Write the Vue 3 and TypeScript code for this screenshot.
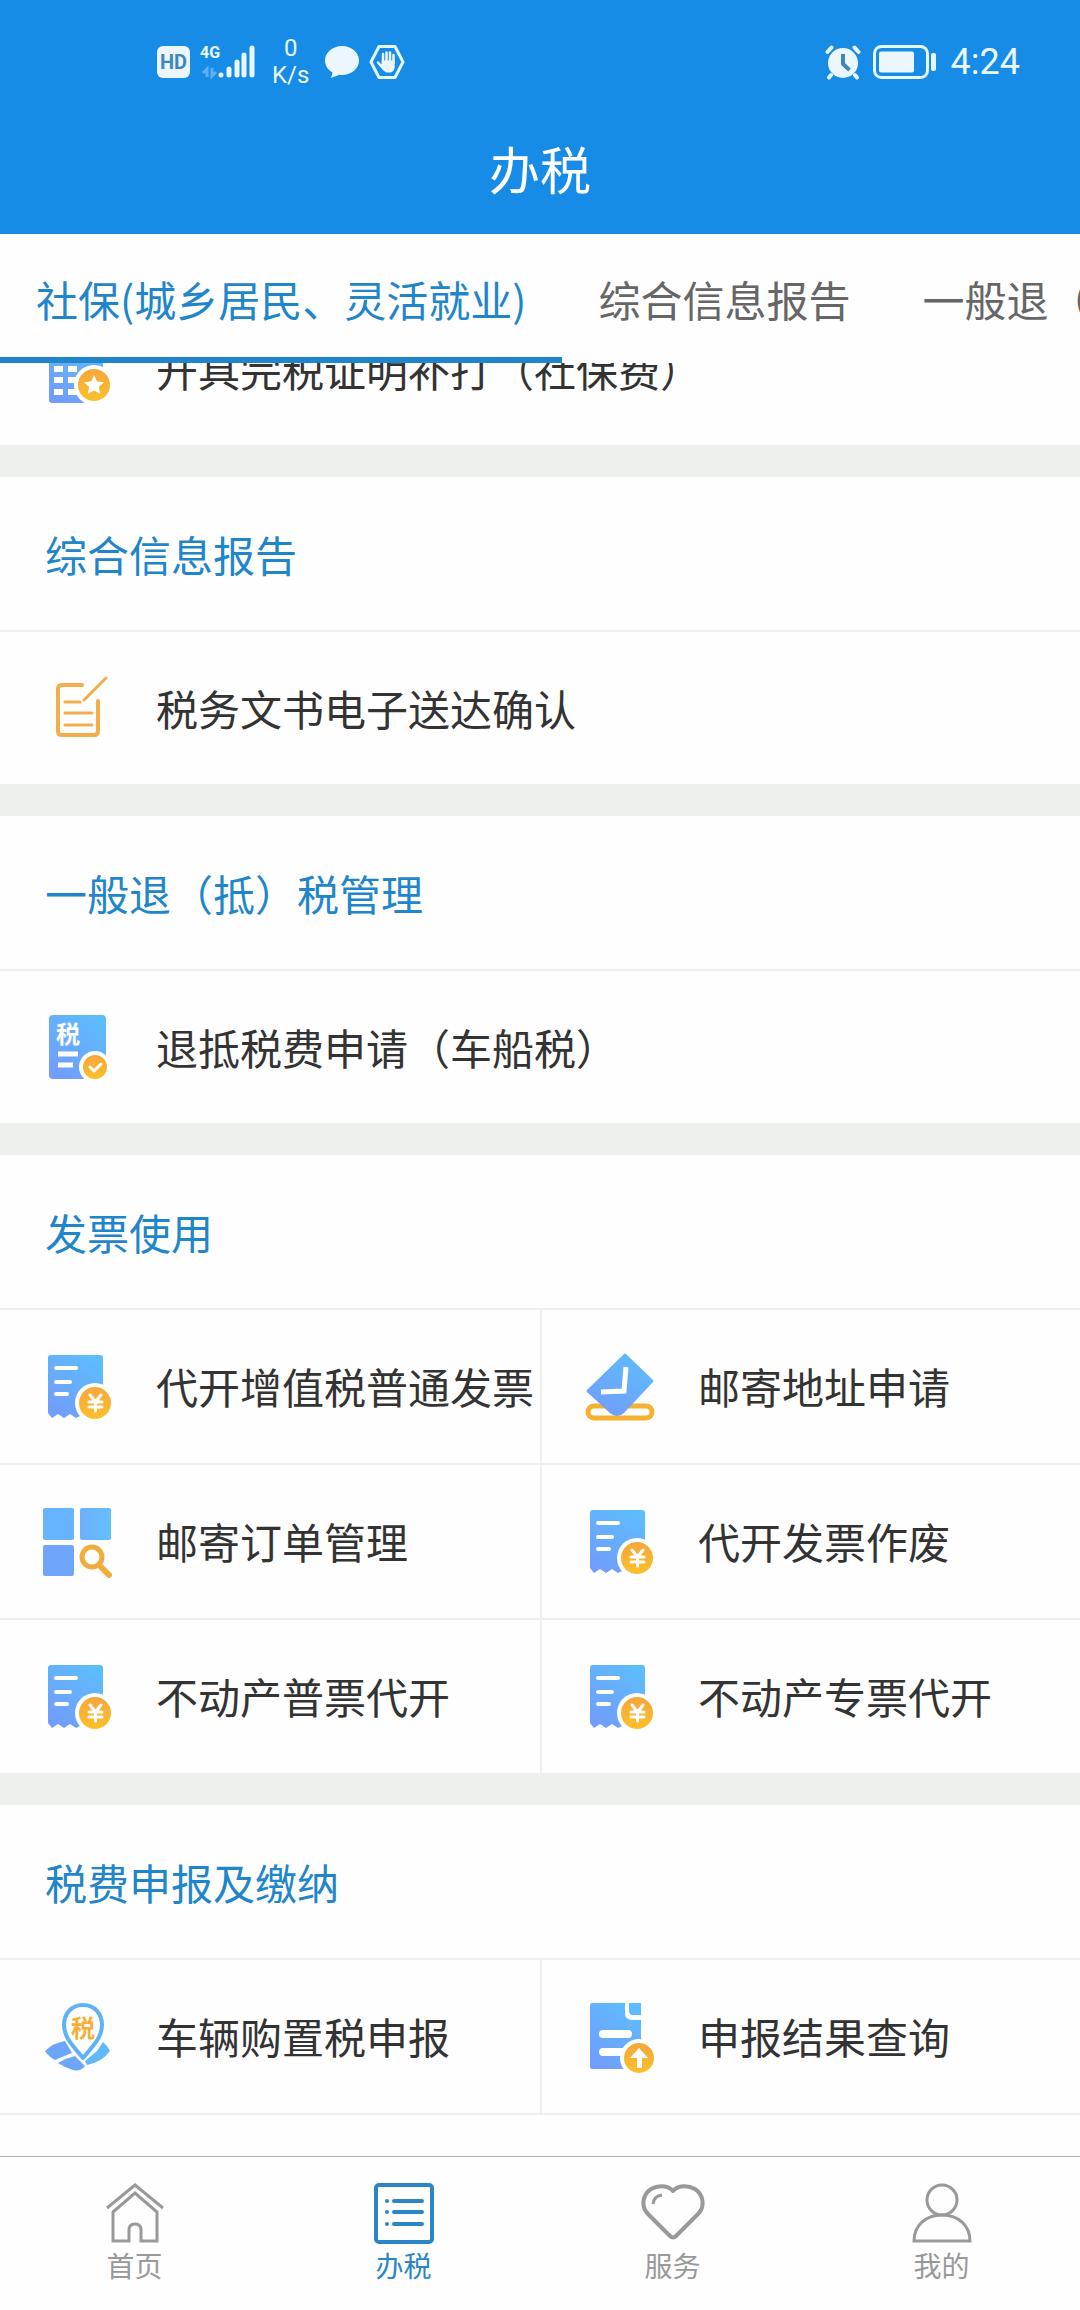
<script setup lang="ts">
import { onMounted, ref } from 'vue'

type IconName = 'certificate' | 'edit' | 'taxdoc' | 'receipt' | 'address' | 'search' | 'pin' | 'result'
type NavName = 'home' | 'list' | 'heart' | 'user'

interface Entry {
  icon: IconName
  label: string
}

interface Section {
  title?: string
  grid?: boolean
  entries: Entry[]
}

const tabs: string[] = ['社保(城乡居民、灵活就业)', '综合信息报告', '一般退（抵）税管理']
const activeTab = ref(0)

const sections: Section[] = [
  { entries: [{ icon: 'certificate', label: '开具完税证明补打（社保费）' }] },
  { title: '综合信息报告', entries: [{ icon: 'edit', label: '税务文书电子送达确认' }] },
  { title: '一般退（抵）税管理', entries: [{ icon: 'taxdoc', label: '退抵税费申请（车船税）' }] },
  {
    title: '发票使用',
    grid: true,
    entries: [
      { icon: 'receipt', label: '代开增值税普通发票' },
      { icon: 'address', label: '邮寄地址申请' },
      { icon: 'search', label: '邮寄订单管理' },
      { icon: 'receipt', label: '代开发票作废' },
      { icon: 'receipt', label: '不动产普票代开' },
      { icon: 'receipt', label: '不动产专票代开' },
    ],
  },
  {
    title: '税费申报及缴纳',
    grid: true,
    entries: [
      { icon: 'pin', label: '车辆购置税申报' },
      { icon: 'result', label: '申报结果查询' },
    ],
  },
]

const navItems: { icon: NavName; label: string }[] = [
  { icon: 'home', label: '首页' },
  { icon: 'list', label: '办税' },
  { icon: 'heart', label: '服务' },
  { icon: 'user', label: '我的' },
]
const activeNav = ref(1)

// The list opens scrolled part of the way past its first row.
const list = ref<HTMLElement | null>(null)
onMounted(() => {
  if (list.value) list.value.scrollTop = 70
})
</script>

<template>
  <div class="app">
    <svg class="defs" width="0" height="0" aria-hidden="true">
      <defs>
        <linearGradient id="blue" x1="0.8" y1="0" x2="0.2" y2="1">
          <stop offset="0" stop-color="#5dbdfc" />
          <stop offset="1" stop-color="#729cfb" />
        </linearGradient>
        <linearGradient id="sky" x1="0" y1="0" x2="1" y2="0">
          <stop offset="0" stop-color="#6db0fd" />
          <stop offset="1" stop-color="#62c0fb" />
        </linearGradient>
        <linearGradient id="gold" x1="0" y1="0" x2="0" y2="1">
          <stop offset="0" stop-color="#f6a63c" />
          <stop offset="1" stop-color="#fbc02a" />
        </linearGradient>
      </defs>
    </svg>

    <header class="header">
      <div class="status">
        <div class="status-left">
          <span class="hd">HD</span>
          <div class="cell">
            <span class="net">4G</span>
            <svg width="56" height="36" viewBox="0 0 56 36" aria-hidden="true">
              <g fill="none" stroke="#5fb0f2" stroke-width="3">
                <path d="M7 33V25l-4 4M12 24v8l4-4" />
              </g>
              <g stroke="#e9f7ff" stroke-width="5" stroke-linecap="round">
                <path d="M21 31v0.1M29 25v6M37 18v13M44 11v20M52 4v27" />
              </g>
            </svg>
          </div>
          <div class="speed"><span>0</span><span>K/s</span></div>
          <svg class="bubble" width="34" height="36" viewBox="0 0 34 36" aria-hidden="true">
            <path fill="#ecf6fe" d="M17 2C7.500 2 0 8.500 0 16.500c0 5 3 9.400 7.500 12L6 34l8.500-3.200c.8.100 1.700.2 2.500.2 9.500 0 17-6.500 17-14.500S26.500 2 17 2z" />
          </svg>
          <svg width="36" height="36" viewBox="0 0 36 36" aria-hidden="true">
            <path fill="none" stroke="#e6f8ff" stroke-width="3" stroke-linejoin="round" d="M10 2.500h16L34 18l-8 15.500H10L2 18z" />
            <path fill="none" stroke="#ecf6fe" stroke-width="2.500" stroke-linecap="round" d="M14 19V10M17.500 18V8.500M21 18V8.500M24.500 19V11M13 23l-4-4.500" />
            <path fill="#ecf6fe" d="M12.700 16.500h13v6.500c0 3-2 5-4 5.500h-4.500c-3-1.500-5.500-5-7-7.500l2.500-1z" />
          </svg>
        </div>
        <div class="status-right">
          <svg width="36" height="36" viewBox="0 0 36 36" aria-hidden="true">
            <circle cx="18" cy="19" r="15" fill="#ecf6fe" />
            <path stroke="#e6f8ff" stroke-width="4" stroke-linecap="round" d="M2.500 8l4-4.500M33.500 8l-4-4.500M6 31l-2 2.500M30 31l2 2.500" />
            <path fill="none" stroke="#3f88bd" stroke-width="4" stroke-linejoin="round" d="M18 10v10l6.500 6" />
          </svg>
          <svg width="64" height="36" viewBox="0 0 64 36" aria-hidden="true">
            <rect x="1.500" y="2.500" width="53" height="31" rx="7" fill="none" stroke="#e6f8ff" stroke-width="3" />
            <rect x="6" y="7.500" width="35" height="21" rx="2" fill="#ecf6fe" />
            <rect x="58" y="9" width="5" height="18" rx="2" fill="#e6f8ff" />
          </svg>
          <time class="clock">4:24</time>
        </div>
      </div>
      <h1 class="title">办税</h1>
    </header>

    <div class="tabs" role="tablist">
      <button
        v-for="(tab, i) in tabs"
        :key="tab"
        type="button"
        role="tab"
        class="tab"
        :class="{ active: i === activeTab }"
        :aria-selected="i === activeTab"
        @click="activeTab = i"
      >
        {{ tab }}
      </button>
    </div>

    <main ref="list" class="list">
      <section v-for="(section, s) in sections" :key="s" class="section">
        <h2 v-if="section.title" class="section-title">{{ section.title }}</h2>
        <div class="rows" :class="{ grid: section.grid }">
          <a v-for="entry in section.entries" :key="entry.label" href="#" class="row">
            <svg class="icon" width="72" height="72" viewBox="0 0 72 72" aria-hidden="true">
              <template v-if="entry.icon === 'certificate'">
                <rect x="7" y="6" width="54" height="64" rx="3" fill="url(#blue)" />
                <path fill="#fff" d="M12 21h9v6h-9zM26 21h9v6h-9zM40 21h9v6h-9zM12 33h9v6h-9zM26 33h9v6h-9zM12 44h9v6h-9zM26 44h9v6h-9zM12 56h9v6h-9zM26 56h9v6h-9z" />
                <circle cx="52" cy="52" r="20" fill="#fff" />
                <circle cx="52" cy="52" r="16" fill="url(#gold)" />
                <path fill="#fff" d="M52 42l3 6.500 7 .8-5.200 4.700 1.500 7-6.300-3.500-6.300 3.500 1.500-7-5.200-4.700 7-.8z" />
              </template>
              <template v-else-if="entry.icon === 'edit'">
                <g fill="none" stroke="#f3ad4a" stroke-width="3" stroke-linecap="round">
                  <path d="M40 13H20q-4 0-4 4v42q0 4 4 4h32q4 0 4-4V29" stroke-width="4" />
                  <path d="M42 28L64 6M23 30h15M23 41h27M23 53h27" />
                </g>
              </template>
              <template v-else-if="entry.icon === 'taxdoc'">
                <rect x="7" y="4" width="57" height="64" rx="4" fill="url(#blue)" />
                <text x="14" y="32" class="glyph white">税</text>
                <path stroke="#fff" stroke-width="5" d="M16 43h20M16 54h15" />
                <circle cx="53" cy="56" r="16" fill="#fff" />
                <circle cx="53" cy="56" r="12" fill="url(#gold)" />
                <path fill="none" stroke="#fff" stroke-width="3" stroke-linecap="round" stroke-linejoin="round" d="M48 56l4 4 7-7" />
              </template>
              <template v-else-if="entry.icon === 'receipt'">
                <path fill="url(#blue)" d="M9 4h49q3 0 3 3v60H42l-4-2-4 2-6-4-6 4-6-4-6 4-4-5V7q0-3 3-3z" />
                <path stroke="#fff" stroke-width="4" stroke-linecap="round" d="M14 17h20M14 31h14M14 43h11" />
                <circle cx="53" cy="52" r="20" fill="#fff" />
                <circle cx="53" cy="52" r="16" fill="url(#gold)" />
                <path fill="none" stroke="#fff" stroke-width="3" stroke-linecap="round" d="M48 44l5.500 7 5.500-7M53.500 51v9M47 51h13M47 56h13" />
              </template>
              <template v-else-if="entry.icon === 'address'">
                <rect x="4" y="55" width="64" height="12" rx="6" fill="none" stroke="#f6b02f" stroke-width="5" />
                <path fill="url(#blue)" d="M42 3l27 26q1 1 0 2L40 62q-7 6-14 0L3 41q-1-1 0-2L40 3q1-1 2 0z" />
                <path fill="none" stroke="#fff" stroke-width="5" d="M42 16l-2 24-23 1" />
              </template>
              <template v-else-if="entry.icon === 'search'">
                <rect x="1" y="2" width="31" height="32" rx="2" fill="#66b4fd" />
                <rect x="38" y="2" width="31" height="32" rx="2" fill="url(#sky)" />
                <rect x="1" y="39" width="31" height="31" rx="2" fill="#6fa6fc" />
                <circle cx="50" cy="51" r="10" fill="none" stroke="#f2ac3c" stroke-width="5" />
                <path stroke="#f2ac3c" stroke-width="6" stroke-linecap="round" d="M58 60l9 9" />
              </template>
              <template v-else-if="entry.icon === 'pin'">
                <path fill="#6ba6f8" d="M3 50q8-8 20-10l7 12q-8 3-17 7-6-3-10-9zM16 62q8-5 17-7l10 10q-5 6-12 4-9-3-15-7z" />
                <path fill="#62b8f9" d="M61 41q5 4 7 9-8 11-23 14l-2-4 12-10z" />
                <path fill="#fff" stroke="#5fb2f8" stroke-width="4" stroke-linejoin="round" d="M41 4C29 4 22 13 22 24c0 13 10 22 19 33 9-11 19-20 19-33C60 13 53 4 41 4z" />
                <text x="29" y="36" class="glyph amber">税</text>
              </template>
              <template v-else>
                <path fill="url(#blue)" d="M8 2h33v10q0 7 7 7h9v49H8q-2 0-2-2V4q0-2 2-2zM45 2h12v12h-8q-4 0-4-4z" />
                <path stroke="#fff" stroke-width="8" stroke-linecap="round" d="M19 33h25M19 51h20" />
                <circle cx="55" cy="57" r="19" fill="#fff" />
                <circle cx="55" cy="57" r="15" fill="url(#gold)" />
                <path fill="#fff" d="M55 47l9 10h-6v10h-5V57h-7z" />
              </template>
            </svg>
            <span class="label">{{ entry.label }}</span>
          </a>
        </div>
      </section>
    </main>

    <nav class="nav">
      <a
        v-for="(item, i) in navItems"
        :key="item.label"
        href="#"
        class="nav-item"
        :class="{ active: i === activeNav }"
        @click.prevent="activeNav = i"
      >
        <svg width="64" height="64" viewBox="0 0 64 64" fill="none" stroke="currentColor" stroke-width="3" aria-hidden="true">
          <path v-if="item.icon === 'home'" d="M4 27L32 4l28 23M10 60V31l22-19 22 19v29H38V49q0-6-6-6t-6 6v11z" />
          <template v-else-if="item.icon === 'list'">
            <rect x="4" y="4" width="56" height="57" rx="3" stroke-width="4" />
            <path stroke-linecap="round" stroke-width="4" d="M22 20h28M22 31h28M22 43h28M15 20v0.1M15 31v0.1M15 43v0.1" />
          </template>
          <template v-else-if="item.icon === 'heart'">
            <path stroke-width="4" stroke-linejoin="round" d="M32 10C27 4 17 4 10 8 1 14 0 26 7 33l22 22q3 3 6 0l22-22c7-7 6-19-3-25-7-4-17-4-22 2z" />
            <path d="M12 23q1-8 9-9" />
          </template>
          <template v-else>
            <circle cx="32" cy="19" r="15" />
            <path d="M32 34C15 34 4 45 4 60h56C60 45 49 34 32 34z" />
          </template>
        </svg>
        <span>{{ item.label }}</span>
      </a>
    </nav>
  </div>
</template>

<style>
body {
  margin: 0;
}
</style>

<style scoped>
.app {
  display: flex;
  flex-direction: column;
  height: 100vh;
  overflow: hidden;
  background: #fefefe;
  color: #333;
  font-family: "Noto Sans CJK SC", sans-serif;
  font-size: 42px;
}

.defs {
  position: absolute;
}

.header {
  flex: none;
  background: #168ce7;
  color: #e9f7ff;
}

.status {
  display: flex;
  justify-content: space-between;
  align-items: center;
  height: 92px;
  padding: 16px 60px 0 157px;
  font-family: Roboto, sans-serif;
}

.status svg {
  flex: none;
  display: block;
}

.status-left,
.status-right {
  display: flex;
  align-items: center;
}

.status-right {
  gap: 12px;
}

.hd {
  width: 33px;
  border-radius: 6px;
  background: #ecf6fe;
  color: #3f88bd;
  font-size: 20px;
  font-weight: 700;
  line-height: 32px;
  text-align: center;
}

.cell {
  position: relative;
  margin-left: 10px;
}

.net {
  position: absolute;
  top: 0;
  left: 0;
  font-size: 16px;
  font-weight: 700;
  line-height: 18px;
}

.speed {
  display: flex;
  flex-direction: column;
  align-items: center;
  margin: 0 16px;
  font-size: 24px;
  line-height: 27px;
}

.bubble {
  margin-right: 10px;
}

.clock {
  margin-left: 2px;
  font-size: 36px;
  line-height: 40px;
}

.title {
  margin: 0;
  padding-bottom: 6px;
  color: #fff;
  font-size: 51px;
  font-weight: 400;
  line-height: 120px;
  text-align: center;
}

.tabs {
  flex: none;
  display: flex;
  overflow: hidden;
}

.tab {
  flex: none;
  padding: 6px 36px 0;
  border: 0;
  border-bottom: 6px solid transparent;
  background: none;
  color: #666;
  font: inherit;
  line-height: 117px;
  white-space: nowrap;
}

.tab.active {
  border-bottom-color: #1f86cb;
  color: #1f86cb;
}

.list {
  flex: 1;
  min-height: 0;
  overflow-y: auto;
  scrollbar-width: none;
}

.section + .section {
  border-top: 30px solid #eef0ee;
}

.section:last-child {
  padding-bottom: 48px;
}

.section-title {
  margin: 0;
  padding: 0 45px;
  border-bottom: 2px solid #eef0ee;
  color: #1f86cb;
  font-size: 42px;
  font-weight: 400;
  line-height: 153px;
}

.row {
  display: flex;
  align-items: center;
  gap: 42px;
  height: 152px;
  padding-left: 42px;
  border-bottom: 2px solid #eef0ee;
  color: #333;
  text-decoration: none;
  white-space: nowrap;
}

.label {
  padding-bottom: 2px;
}

.grid {
  display: grid;
  grid-template-columns: 1fr 1fr;
}

.grid .row {
  height: 153px;
}

.grid .row:nth-child(even) {
  border-left: 2px solid #eef0ee;
}

.icon {
  flex: none;
}

.glyph {
  font-size: 24px;
  font-weight: 700;
}

.white {
  fill: #fff;
}

.amber {
  fill: #f5ae37;
}

.nav {
  flex: none;
  display: flex;
  padding-right: 4px;
  border-top: 1px solid #aeb2b1;
}

.nav-item {
  flex: 1;
  display: flex;
  flex-direction: column;
  align-items: center;
  gap: 2px;
  padding: 24px 0 27px;
  color: #999;
  font-size: 28px;
  line-height: 36px;
  text-decoration: none;
}

.nav-item.active {
  color: #2b86c5;
}
</style>
